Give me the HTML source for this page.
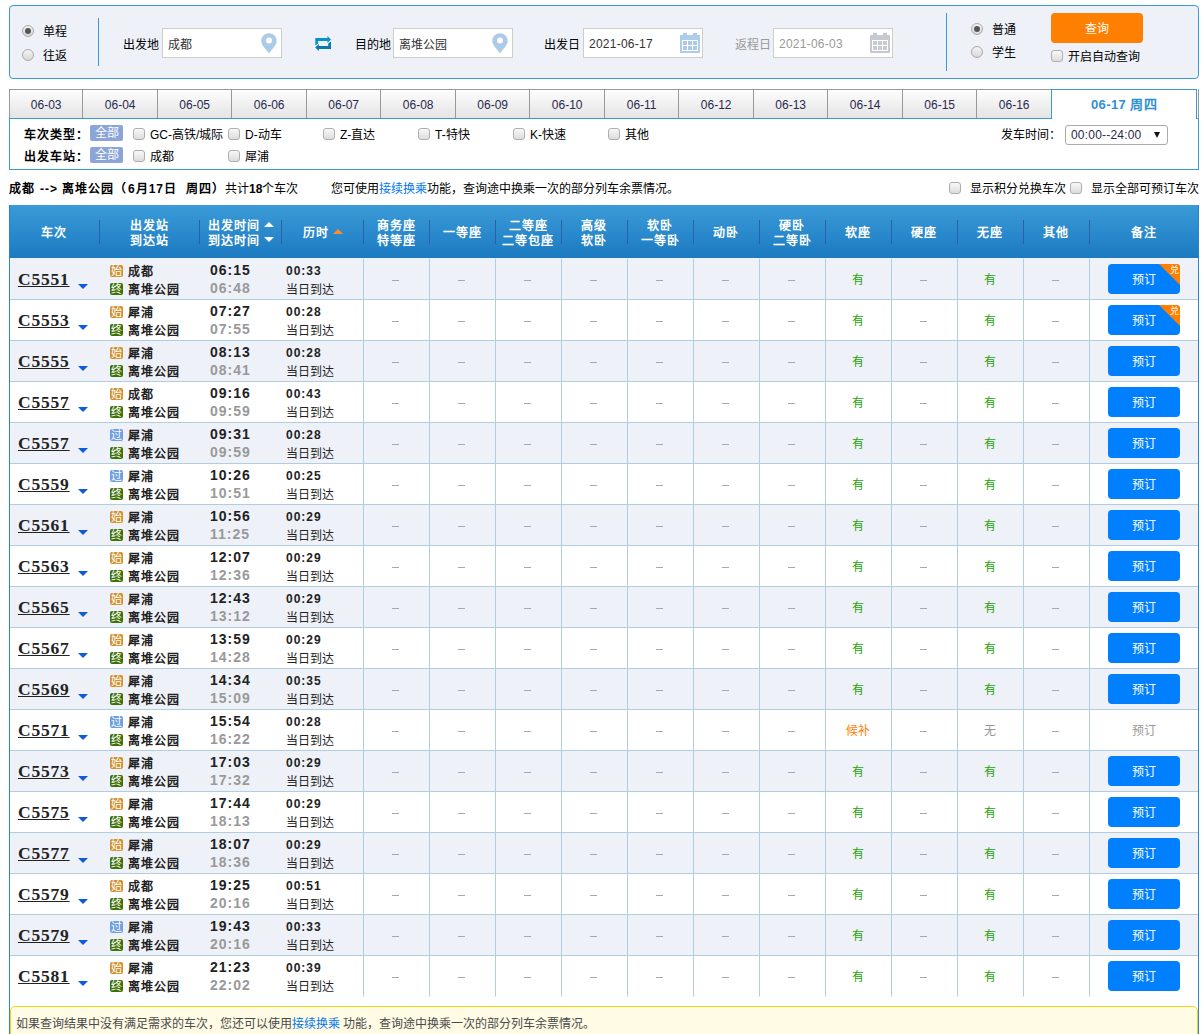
<!DOCTYPE html>
<html lang="zh-CN"><head><meta charset="utf-8"><title>车票预订</title>
<style>
*{box-sizing:border-box;}
html,body{margin:0;padding:0;}
body{width:1204px;height:1034px;overflow:hidden;background:#fff;position:relative;
 font-family:"Liberation Sans",sans-serif;font-size:12px;line-height:18px;color:#000;}
a{text-decoration:none;color:inherit;}
i,em,b{font-style:normal;}
.abs{position:absolute;}
/* search box */
.search{position:absolute;left:9px;top:5px;width:1190px;height:74px;border:1px solid #3b99d4;border-radius:4px;background:#eef1f8;}
.vl{position:absolute;width:1px;background:#3b99d4;}
.radio{position:absolute;width:12px;height:12px;border-radius:50%;border:1px solid #a9a9a9;background:linear-gradient(#f4f4f4,#d8d8d8);}
.radio.on:after{content:"";position:absolute;left:2px;top:2px;width:6px;height:6px;border-radius:50%;background:#555;}
.lb{position:absolute;height:18px;line-height:18px;white-space:nowrap;margin-top:1px;}
.bd{font-weight:bold;letter-spacing:1px;}
.inp{position:absolute;top:28px;width:120px;height:30px;border:1px solid #cfcdc7;background:#fff;}
.inp span{position:absolute;left:5px;top:7px;line-height:18px;color:#333;}
.gray{color:#999;}
.inp.dis span{color:#999;}
.inp span.dt{top:6px;letter-spacing:.25px;}
.qbtn{position:absolute;left:1051px;top:13px;width:92px;height:30px;border-radius:4px;background:#ff8000;color:#fff;text-align:center;line-height:33px;}
.cb{position:absolute;width:12px;height:12px;border:1px solid #aeaeae;border-radius:3px;background:linear-gradient(#f8f8f8,#dcdcdc);}
/* tabs */
.tabs{position:absolute;left:9px;top:89px;width:1042px;height:29px;border-top:1px solid #999;display:flex;}
.tabs div{flex:0 0 74.5px;border-left:1px solid #999;background:linear-gradient(#fdfdfd,#e4e4e4);text-align:center;line-height:30px;color:#28284e;}
.tabs div:first-child{flex-basis:73.4px;}
.tabon{position:absolute;left:1051px;top:89px;width:146px;height:30px;border:1px solid #3b99d4;border-bottom:0;background:#fff;text-align:center;line-height:29px;color:#2e8fd6;font-weight:bold;font-size:13px;letter-spacing:.4px;}
.tabr{position:absolute;left:1198px;top:89px;width:1px;height:29px;background:#999;}
/* filter */
.filter{position:absolute;left:9px;top:118px;width:1190px;height:52px;border:1px solid #3b99d4;background:#fff;}
.all{position:absolute;left:90px;width:33px;height:16px;border-radius:2px;background:#8ba5d8;color:#fff;text-align:center;line-height:17px;}
.sel{position:absolute;left:1065px;top:125px;width:103px;height:20px;border:1px solid #aaa;border-radius:3px;background:#fff;}
.sel span{position:absolute;left:5px;top:0;line-height:18px;color:#2a2a4a;letter-spacing:.2px;}
.sel i{position:absolute;left:88px;top:6px;width:0;height:0;border-left:3.5px solid transparent;border-right:3.5px solid transparent;border-top:6px solid #111;}
/* header */
.hd{position:absolute;left:9px;top:205px;width:1190px;height:53px;background:linear-gradient(#3b9bd8,#1c7ac1);box-shadow:inset 1px 0 0 #2583cb,inset -1px 0 0 #2583cb;color:#fff;font-weight:bold;}
.hd .h{position:absolute;top:2px;height:53px;text-align:center;line-height:15px;letter-spacing:1px;display:flex;align-items:center;justify-content:center;white-space:nowrap;}
.hd .dv{position:absolute;top:15px;width:1px;height:24px;background:#2c5fa8;}
.tri-u{position:absolute;width:0;height:0;border-left:5px solid transparent;border-right:5px solid transparent;border-bottom:5px solid #fff;}
.tri-d{position:absolute;width:0;height:0;border-left:5px solid transparent;border-right:5px solid transparent;border-top:5px solid #fff;}
/* table */
.tb{position:absolute;left:9px;top:258px;width:1190px;table-layout:fixed;border-collapse:separate;border-spacing:0;border-left:1px solid #2b87cd;border-right:1px solid #2b87cd;}
.tb td{height:41px;padding:0;border-bottom:1px solid #b0cedd;vertical-align:middle;}
.tb tr.first td{height:42px;border-top:1px solid #eef1f8;}
.tb tr.last td{border-bottom-color:#fff;}
.tb tr.odd td{background:#eef1f8;}
.tb tr.even td{background:#fff;}
.c1{width:89px;}
.c2{width:100px;}
.c3{width:82px;}
.c4{width:83px;border-right:1px solid #b0cedd;}
.s{width:66px;border-right:1px solid #b0cedd;text-align:center;}
.tb td.s{padding:2px 2px 0 0;}
.c16{width:108px;}
.tn{position:relative;height:40px;}
.num{position:absolute;left:8px;top:9px;letter-spacing:.8px;font-family:"Liberation Serif",serif;font-weight:bold;font-size:17.5px;line-height:22px;color:#222;text-decoration:underline;}
.dd{position:absolute;left:68px;top:25px;width:0;height:0;border-left:5px solid transparent;border-right:5px solid transparent;border-top:5px solid #0d5bdd;}
.st{position:relative;top:2px;height:18px;line-height:18px;padding-left:29px;font-weight:bold;letter-spacing:1px;color:#222;white-space:nowrap;}
.ic{position:absolute;left:11px;top:2px;letter-spacing:0;width:13px;height:12px;border-radius:2px;color:#fff;font-size:11px;line-height:12px;text-align:center;font-weight:normal;overflow:hidden;}
.ic-s{background:#cf9232;}
.ic-g{background:#6f9fe2;}
.ic-z{background:#3d7008;}
.t1,.t2{height:18px;line-height:18px;font-weight:bold;font-size:14px;letter-spacing:1px;padding-left:11px;color:#222;}
.t2{color:#999;}
.d1{position:relative;top:1px;height:18px;line-height:18px;font-weight:bold;letter-spacing:1px;padding-left:5px;color:#222;}
.d2{position:relative;top:2px;height:18px;line-height:18px;padding-left:5px;color:#222;}
.da{display:inline-block;width:7px;height:1px;background:#a8a8a8;vertical-align:middle;}
.yes{color:#26a306;}
.hb{color:#ff8000;}
.no{color:#999;}
.btn{display:block;position:relative;margin-left:18px;width:72px;height:30px;border-radius:4px;background:#0080ff;color:#fff;text-align:center;line-height:33px;overflow:hidden;}
.dui{position:absolute;right:0;top:0;width:0;height:0;border-left:21px solid transparent;border-top:21px solid #ff8000;}
.btn em{position:absolute;right:1px;top:1px;font-size:9px;line-height:10px;color:#fff;}
.nobtn{display:block;margin-left:18px;width:72px;text-align:center;color:#999;position:relative;top:1px;}
.sides{position:absolute;left:9px;top:996px;width:1190px;height:40px;border-left:1px solid #2b87cd;border-right:1px solid #2b87cd;}
.note{position:absolute;left:10px;top:1006px;width:1188px;height:40px;border:1px solid #fcd01e;border-radius:5px;background:#fffbe5;padding:8px 0 0 5px;line-height:18px;color:#4a4a4a;white-space:nowrap;}
.note a,.lk{color:#0077ee;}

</style></head><body>
<div class="search"></div>
<span class="radio on" style="left:22px;top:25px"></span><span class="lb" style="left:43px;top:22px">单程</span>
<span class="radio" style="left:22px;top:49px"></span><span class="lb" style="left:43px;top:46px">往返</span>
<div class="vl" style="left:98px;top:18px;height:48px"></div>
<span class="lb" style="left:123px;top:35px">出发地</span>
<div class="inp" style="left:162px"><span>成都</span></div>
<svg class="abs" style="left:261px;top:33px" width="16" height="21" viewBox="0 0 16 21"><path d="M8 0.3C3.7 0.3 0.3 3.6 0.3 7.8C0.3 12.4 4.6 15.6 8 20.6C11.4 15.6 15.7 12.4 15.7 7.8C15.7 3.6 12.3 0.3 8 0.3Z" fill="#accbe8"/><circle cx="8" cy="7.4" r="3" fill="#fff"/></svg>
<svg class="abs" style="left:315px;top:36px" width="16.3" height="15" viewBox="0 0 17 15" preserveAspectRatio="none"><path d="M0.3 2H13V0L16.8 3.5L13 7V5H3.3V7.5L0.3 9.6Z" fill="#0a92c8"/><path d="M16.8 13H4V15L0.2 11.5L4 8V10H13.8V7.5L16.8 5.4Z" fill="#0a78ae"/></svg>
<span class="lb" style="left:355px;top:35px">目的地</span>
<div class="inp" style="left:393px"><span>离堆公园</span></div>
<svg class="abs" style="left:492px;top:33px" width="16" height="21" viewBox="0 0 16 21"><path d="M8 0.3C3.7 0.3 0.3 3.6 0.3 7.8C0.3 12.4 4.6 15.6 8 20.6C11.4 15.6 15.7 12.4 15.7 7.8C15.7 3.6 12.3 0.3 8 0.3Z" fill="#accbe8"/><circle cx="8" cy="7.4" r="3" fill="#fff"/></svg>
<span class="lb" style="left:544px;top:35px">出发日</span>
<div class="inp" style="left:583px"><span class="dt">2021-06-17</span></div>
<svg class="abs" style="left:680px;top:33px" width="20" height="20" viewBox="0 0 20 20"><rect x="0" y="2" width="20" height="18" fill="#acceeb"/><rect x="3" y="0" width="4" height="2" fill="#acceeb"/><rect x="13" y="0" width="4" height="2" fill="#acceeb"/><rect x="2" y="7" width="16" height="11" fill="#fff"/><g fill="#abc9e4"><rect x="3" y="8" width="4" height="4"/><rect x="8" y="8" width="4" height="4"/><rect x="13" y="8" width="4" height="4"/><rect x="3" y="13" width="4" height="4"/><rect x="8" y="13" width="4" height="4"/><rect x="13" y="13" width="4" height="4"/></g></svg>
<span class="lb gray" style="left:735px;top:35px">返程日</span>
<div class="inp dis" style="left:773px"><span class="dt">2021-06-03</span></div>
<svg class="abs" style="left:870px;top:33px" width="20" height="20" viewBox="0 0 20 20"><rect x="0" y="2" width="20" height="18" fill="#c6c8d2"/><rect x="3" y="0" width="4" height="2" fill="#c6c8d2"/><rect x="13" y="0" width="4" height="2" fill="#c6c8d2"/><rect x="2" y="7" width="16" height="11" fill="#fff"/><g fill="#c9cbd4"><rect x="3" y="8" width="4" height="4"/><rect x="8" y="8" width="4" height="4"/><rect x="13" y="8" width="4" height="4"/><rect x="3" y="13" width="4" height="4"/><rect x="8" y="13" width="4" height="4"/><rect x="13" y="13" width="4" height="4"/></g></svg>
<div class="vl" style="left:946px;top:13px;height:58px"></div>
<span class="radio on" style="left:971px;top:23px"></span><span class="lb" style="left:992px;top:20px">普通</span>
<span class="radio" style="left:971px;top:46px"></span><span class="lb" style="left:992px;top:43px">学生</span>
<a class="qbtn">查询</a>
<span class="cb" style="left:1051px;top:50px"></span><span class="lb" style="left:1068px;top:47px">开启自动查询</span>

<div class="tabs"><div>06-03</div><div>06-04</div><div>06-05</div><div>06-06</div><div>06-07</div><div>06-08</div><div>06-09</div><div>06-10</div><div>06-11</div><div>06-12</div><div>06-13</div><div>06-14</div><div>06-15</div><div>06-16</div></div>
<div class="filter"></div>
<div class="tabon">06-17 周四</div><div class="tabr"></div>
<span class="lb" style="left:24px;top:125px"><b class="bd">车次类型</b><b>：</b></span>
<span class="all" style="top:125px">全部</span>
<span class="cb" style="left:133px;top:128px"></span><span class="lb" style="left:150px;top:125px">GC-高铁/城际</span>
<span class="cb" style="left:228px;top:128px"></span><span class="lb" style="left:245px;top:125px">D-动车</span>
<span class="cb" style="left:323px;top:128px"></span><span class="lb" style="left:340px;top:125px">Z-直达</span>
<span class="cb" style="left:418px;top:128px"></span><span class="lb" style="left:435px;top:125px">T-特快</span>
<span class="cb" style="left:513px;top:128px"></span><span class="lb" style="left:530px;top:125px">K-快速</span>
<span class="cb" style="left:608px;top:128px"></span><span class="lb" style="left:625px;top:125px">其他</span>
<span class="lb" style="left:24px;top:147px"><b class="bd">出发车站</b><b>：</b></span>
<span class="all" style="top:147px">全部</span>
<span class="cb" style="left:133px;top:150px"></span><span class="lb" style="left:150px;top:147px">成都</span>
<span class="cb" style="left:228px;top:150px"></span><span class="lb" style="left:245px;top:147px">犀浦</span>
<span class="lb" style="left:1001px;top:125px">发车时间：</span>
<div class="sel"><span>00:00--24:00</span><i></i></div>

<span class="lb bd" style="left:9px;top:179px">成都</span><span class="lb bd" style="left:40px;top:179px">--&gt;</span><span class="lb bd" style="left:62px;top:179px">离堆公园（</span><span class="lb bd" style="left:128px;top:179px">6月17日</span><span class="lb bd" style="left:186px;top:179px">周四）</span><span class="lb" style="left:225px;top:179px">共计<b>18</b>个车次</span>
<span class="lb" style="left:331px;top:179px">您可使用<a class="lk">接续换乘</a>功能，查询途中换乘一次的部分列车余票情况。</span>
<span class="cb" style="left:949px;top:182px"></span><span class="lb" style="left:970px;top:179px">显示积分兑换车次</span>
<span class="cb" style="left:1070px;top:182px"></span><span class="lb" style="left:1091px;top:179px">显示全部可预订车次</span>

<div class="hd">
<div class="h" style="left:0;width:90px">车次</div><i class="dv" style="left:90px"></i>
<div class="h" style="left:90px;width:100px">出发站<br>到达站</div><i class="dv" style="left:190px"></i>
<div class="h" style="left:198px;width:54px">出发时间<br>到达时间</div><i class="tri-u" style="left:255px;top:17px"></i><i class="tri-d" style="left:255px;top:32px"></i><i class="dv" style="left:272px"></i>
<div class="h" style="left:294px;width:26px">历时</div><i class="tri-u" style="left:324px;top:24px;border-bottom-color:#ff8a2a"></i><i class="dv" style="left:354px"></i>
<div class="h" style="left:354px;width:66px">商务座<br>特等座</div><i class="dv" style="left:420px"></i>
<div class="h" style="left:420px;width:66px">一等座</div><i class="dv" style="left:486px"></i>
<div class="h" style="left:486px;width:66px">二等座<br>二等包座</div><i class="dv" style="left:552px"></i>
<div class="h" style="left:552px;width:66px">高级<br>软卧</div><i class="dv" style="left:618px"></i>
<div class="h" style="left:618px;width:66px">软卧<br>一等卧</div><i class="dv" style="left:684px"></i>
<div class="h" style="left:684px;width:66px">动卧</div><i class="dv" style="left:750px"></i>
<div class="h" style="left:750px;width:66px">硬卧<br>二等卧</div><i class="dv" style="left:816px"></i>
<div class="h" style="left:816px;width:66px">软座</div><i class="dv" style="left:882px"></i>
<div class="h" style="left:882px;width:66px">硬座</div><i class="dv" style="left:948px"></i>
<div class="h" style="left:948px;width:66px">无座</div><i class="dv" style="left:1014px"></i>
<div class="h" style="left:1014px;width:66px">其他</div><i class="dv" style="left:1080px"></i>
<div class="h" style="left:1080px;width:110px">备注</div>
</div>
<table class="tb" cellspacing="0" cellpadding="0"><tbody>
<tr class="odd first"><td class="c1"><div class="tn"><a class="num">C5551</a><i class="dd"></i></div></td><td class="c2"><div class="st"><i class="ic ic-s">始</i>成都</div><div class="st"><i class="ic ic-z">终</i>离堆公园</div></td><td class="c3"><div class="t1">06:15</div><div class="t2">06:48</div></td><td class="c4"><div class="d1">00:33</div><div class="d2">当日到达</div></td><td class="s"><i class="da"></i></td><td class="s"><i class="da"></i></td><td class="s"><i class="da"></i></td><td class="s"><i class="da"></i></td><td class="s"><i class="da"></i></td><td class="s"><i class="da"></i></td><td class="s"><i class="da"></i></td><td class="s yes">有</td><td class="s"><i class="da"></i></td><td class="s yes">有</td><td class="s"><i class="da"></i></td><td class="c16"><a class="btn">预订<b class="dui"></b><em>兑</em></a></td></tr>
<tr class="even"><td class="c1"><div class="tn"><a class="num">C5553</a><i class="dd"></i></div></td><td class="c2"><div class="st"><i class="ic ic-s">始</i>犀浦</div><div class="st"><i class="ic ic-z">终</i>离堆公园</div></td><td class="c3"><div class="t1">07:27</div><div class="t2">07:55</div></td><td class="c4"><div class="d1">00:28</div><div class="d2">当日到达</div></td><td class="s"><i class="da"></i></td><td class="s"><i class="da"></i></td><td class="s"><i class="da"></i></td><td class="s"><i class="da"></i></td><td class="s"><i class="da"></i></td><td class="s"><i class="da"></i></td><td class="s"><i class="da"></i></td><td class="s yes">有</td><td class="s"><i class="da"></i></td><td class="s yes">有</td><td class="s"><i class="da"></i></td><td class="c16"><a class="btn">预订<b class="dui"></b><em>兑</em></a></td></tr>
<tr class="odd"><td class="c1"><div class="tn"><a class="num">C5555</a><i class="dd"></i></div></td><td class="c2"><div class="st"><i class="ic ic-s">始</i>犀浦</div><div class="st"><i class="ic ic-z">终</i>离堆公园</div></td><td class="c3"><div class="t1">08:13</div><div class="t2">08:41</div></td><td class="c4"><div class="d1">00:28</div><div class="d2">当日到达</div></td><td class="s"><i class="da"></i></td><td class="s"><i class="da"></i></td><td class="s"><i class="da"></i></td><td class="s"><i class="da"></i></td><td class="s"><i class="da"></i></td><td class="s"><i class="da"></i></td><td class="s"><i class="da"></i></td><td class="s yes">有</td><td class="s"><i class="da"></i></td><td class="s yes">有</td><td class="s"><i class="da"></i></td><td class="c16"><a class="btn">预订</a></td></tr>
<tr class="even"><td class="c1"><div class="tn"><a class="num">C5557</a><i class="dd"></i></div></td><td class="c2"><div class="st"><i class="ic ic-s">始</i>成都</div><div class="st"><i class="ic ic-z">终</i>离堆公园</div></td><td class="c3"><div class="t1">09:16</div><div class="t2">09:59</div></td><td class="c4"><div class="d1">00:43</div><div class="d2">当日到达</div></td><td class="s"><i class="da"></i></td><td class="s"><i class="da"></i></td><td class="s"><i class="da"></i></td><td class="s"><i class="da"></i></td><td class="s"><i class="da"></i></td><td class="s"><i class="da"></i></td><td class="s"><i class="da"></i></td><td class="s yes">有</td><td class="s"><i class="da"></i></td><td class="s yes">有</td><td class="s"><i class="da"></i></td><td class="c16"><a class="btn">预订</a></td></tr>
<tr class="odd"><td class="c1"><div class="tn"><a class="num">C5557</a><i class="dd"></i></div></td><td class="c2"><div class="st"><i class="ic ic-g">过</i>犀浦</div><div class="st"><i class="ic ic-z">终</i>离堆公园</div></td><td class="c3"><div class="t1">09:31</div><div class="t2">09:59</div></td><td class="c4"><div class="d1">00:28</div><div class="d2">当日到达</div></td><td class="s"><i class="da"></i></td><td class="s"><i class="da"></i></td><td class="s"><i class="da"></i></td><td class="s"><i class="da"></i></td><td class="s"><i class="da"></i></td><td class="s"><i class="da"></i></td><td class="s"><i class="da"></i></td><td class="s yes">有</td><td class="s"><i class="da"></i></td><td class="s yes">有</td><td class="s"><i class="da"></i></td><td class="c16"><a class="btn">预订</a></td></tr>
<tr class="even"><td class="c1"><div class="tn"><a class="num">C5559</a><i class="dd"></i></div></td><td class="c2"><div class="st"><i class="ic ic-g">过</i>犀浦</div><div class="st"><i class="ic ic-z">终</i>离堆公园</div></td><td class="c3"><div class="t1">10:26</div><div class="t2">10:51</div></td><td class="c4"><div class="d1">00:25</div><div class="d2">当日到达</div></td><td class="s"><i class="da"></i></td><td class="s"><i class="da"></i></td><td class="s"><i class="da"></i></td><td class="s"><i class="da"></i></td><td class="s"><i class="da"></i></td><td class="s"><i class="da"></i></td><td class="s"><i class="da"></i></td><td class="s yes">有</td><td class="s"><i class="da"></i></td><td class="s yes">有</td><td class="s"><i class="da"></i></td><td class="c16"><a class="btn">预订</a></td></tr>
<tr class="odd"><td class="c1"><div class="tn"><a class="num">C5561</a><i class="dd"></i></div></td><td class="c2"><div class="st"><i class="ic ic-s">始</i>犀浦</div><div class="st"><i class="ic ic-z">终</i>离堆公园</div></td><td class="c3"><div class="t1">10:56</div><div class="t2">11:25</div></td><td class="c4"><div class="d1">00:29</div><div class="d2">当日到达</div></td><td class="s"><i class="da"></i></td><td class="s"><i class="da"></i></td><td class="s"><i class="da"></i></td><td class="s"><i class="da"></i></td><td class="s"><i class="da"></i></td><td class="s"><i class="da"></i></td><td class="s"><i class="da"></i></td><td class="s yes">有</td><td class="s"><i class="da"></i></td><td class="s yes">有</td><td class="s"><i class="da"></i></td><td class="c16"><a class="btn">预订</a></td></tr>
<tr class="even"><td class="c1"><div class="tn"><a class="num">C5563</a><i class="dd"></i></div></td><td class="c2"><div class="st"><i class="ic ic-s">始</i>犀浦</div><div class="st"><i class="ic ic-z">终</i>离堆公园</div></td><td class="c3"><div class="t1">12:07</div><div class="t2">12:36</div></td><td class="c4"><div class="d1">00:29</div><div class="d2">当日到达</div></td><td class="s"><i class="da"></i></td><td class="s"><i class="da"></i></td><td class="s"><i class="da"></i></td><td class="s"><i class="da"></i></td><td class="s"><i class="da"></i></td><td class="s"><i class="da"></i></td><td class="s"><i class="da"></i></td><td class="s yes">有</td><td class="s"><i class="da"></i></td><td class="s yes">有</td><td class="s"><i class="da"></i></td><td class="c16"><a class="btn">预订</a></td></tr>
<tr class="odd"><td class="c1"><div class="tn"><a class="num">C5565</a><i class="dd"></i></div></td><td class="c2"><div class="st"><i class="ic ic-s">始</i>犀浦</div><div class="st"><i class="ic ic-z">终</i>离堆公园</div></td><td class="c3"><div class="t1">12:43</div><div class="t2">13:12</div></td><td class="c4"><div class="d1">00:29</div><div class="d2">当日到达</div></td><td class="s"><i class="da"></i></td><td class="s"><i class="da"></i></td><td class="s"><i class="da"></i></td><td class="s"><i class="da"></i></td><td class="s"><i class="da"></i></td><td class="s"><i class="da"></i></td><td class="s"><i class="da"></i></td><td class="s yes">有</td><td class="s"><i class="da"></i></td><td class="s yes">有</td><td class="s"><i class="da"></i></td><td class="c16"><a class="btn">预订</a></td></tr>
<tr class="even"><td class="c1"><div class="tn"><a class="num">C5567</a><i class="dd"></i></div></td><td class="c2"><div class="st"><i class="ic ic-s">始</i>犀浦</div><div class="st"><i class="ic ic-z">终</i>离堆公园</div></td><td class="c3"><div class="t1">13:59</div><div class="t2">14:28</div></td><td class="c4"><div class="d1">00:29</div><div class="d2">当日到达</div></td><td class="s"><i class="da"></i></td><td class="s"><i class="da"></i></td><td class="s"><i class="da"></i></td><td class="s"><i class="da"></i></td><td class="s"><i class="da"></i></td><td class="s"><i class="da"></i></td><td class="s"><i class="da"></i></td><td class="s yes">有</td><td class="s"><i class="da"></i></td><td class="s yes">有</td><td class="s"><i class="da"></i></td><td class="c16"><a class="btn">预订</a></td></tr>
<tr class="odd"><td class="c1"><div class="tn"><a class="num">C5569</a><i class="dd"></i></div></td><td class="c2"><div class="st"><i class="ic ic-s">始</i>犀浦</div><div class="st"><i class="ic ic-z">终</i>离堆公园</div></td><td class="c3"><div class="t1">14:34</div><div class="t2">15:09</div></td><td class="c4"><div class="d1">00:35</div><div class="d2">当日到达</div></td><td class="s"><i class="da"></i></td><td class="s"><i class="da"></i></td><td class="s"><i class="da"></i></td><td class="s"><i class="da"></i></td><td class="s"><i class="da"></i></td><td class="s"><i class="da"></i></td><td class="s"><i class="da"></i></td><td class="s yes">有</td><td class="s"><i class="da"></i></td><td class="s yes">有</td><td class="s"><i class="da"></i></td><td class="c16"><a class="btn">预订</a></td></tr>
<tr class="even"><td class="c1"><div class="tn"><a class="num">C5571</a><i class="dd"></i></div></td><td class="c2"><div class="st"><i class="ic ic-g">过</i>犀浦</div><div class="st"><i class="ic ic-z">终</i>离堆公园</div></td><td class="c3"><div class="t1">15:54</div><div class="t2">16:22</div></td><td class="c4"><div class="d1">00:28</div><div class="d2">当日到达</div></td><td class="s"><i class="da"></i></td><td class="s"><i class="da"></i></td><td class="s"><i class="da"></i></td><td class="s"><i class="da"></i></td><td class="s"><i class="da"></i></td><td class="s"><i class="da"></i></td><td class="s"><i class="da"></i></td><td class="s hb">候补</td><td class="s"><i class="da"></i></td><td class="s no">无</td><td class="s"><i class="da"></i></td><td class="c16"><span class="nobtn">预订</span></td></tr>
<tr class="odd"><td class="c1"><div class="tn"><a class="num">C5573</a><i class="dd"></i></div></td><td class="c2"><div class="st"><i class="ic ic-s">始</i>犀浦</div><div class="st"><i class="ic ic-z">终</i>离堆公园</div></td><td class="c3"><div class="t1">17:03</div><div class="t2">17:32</div></td><td class="c4"><div class="d1">00:29</div><div class="d2">当日到达</div></td><td class="s"><i class="da"></i></td><td class="s"><i class="da"></i></td><td class="s"><i class="da"></i></td><td class="s"><i class="da"></i></td><td class="s"><i class="da"></i></td><td class="s"><i class="da"></i></td><td class="s"><i class="da"></i></td><td class="s yes">有</td><td class="s"><i class="da"></i></td><td class="s yes">有</td><td class="s"><i class="da"></i></td><td class="c16"><a class="btn">预订</a></td></tr>
<tr class="even"><td class="c1"><div class="tn"><a class="num">C5575</a><i class="dd"></i></div></td><td class="c2"><div class="st"><i class="ic ic-s">始</i>犀浦</div><div class="st"><i class="ic ic-z">终</i>离堆公园</div></td><td class="c3"><div class="t1">17:44</div><div class="t2">18:13</div></td><td class="c4"><div class="d1">00:29</div><div class="d2">当日到达</div></td><td class="s"><i class="da"></i></td><td class="s"><i class="da"></i></td><td class="s"><i class="da"></i></td><td class="s"><i class="da"></i></td><td class="s"><i class="da"></i></td><td class="s"><i class="da"></i></td><td class="s"><i class="da"></i></td><td class="s yes">有</td><td class="s"><i class="da"></i></td><td class="s yes">有</td><td class="s"><i class="da"></i></td><td class="c16"><a class="btn">预订</a></td></tr>
<tr class="odd"><td class="c1"><div class="tn"><a class="num">C5577</a><i class="dd"></i></div></td><td class="c2"><div class="st"><i class="ic ic-s">始</i>犀浦</div><div class="st"><i class="ic ic-z">终</i>离堆公园</div></td><td class="c3"><div class="t1">18:07</div><div class="t2">18:36</div></td><td class="c4"><div class="d1">00:29</div><div class="d2">当日到达</div></td><td class="s"><i class="da"></i></td><td class="s"><i class="da"></i></td><td class="s"><i class="da"></i></td><td class="s"><i class="da"></i></td><td class="s"><i class="da"></i></td><td class="s"><i class="da"></i></td><td class="s"><i class="da"></i></td><td class="s yes">有</td><td class="s"><i class="da"></i></td><td class="s yes">有</td><td class="s"><i class="da"></i></td><td class="c16"><a class="btn">预订</a></td></tr>
<tr class="even"><td class="c1"><div class="tn"><a class="num">C5579</a><i class="dd"></i></div></td><td class="c2"><div class="st"><i class="ic ic-s">始</i>成都</div><div class="st"><i class="ic ic-z">终</i>离堆公园</div></td><td class="c3"><div class="t1">19:25</div><div class="t2">20:16</div></td><td class="c4"><div class="d1">00:51</div><div class="d2">当日到达</div></td><td class="s"><i class="da"></i></td><td class="s"><i class="da"></i></td><td class="s"><i class="da"></i></td><td class="s"><i class="da"></i></td><td class="s"><i class="da"></i></td><td class="s"><i class="da"></i></td><td class="s"><i class="da"></i></td><td class="s yes">有</td><td class="s"><i class="da"></i></td><td class="s yes">有</td><td class="s"><i class="da"></i></td><td class="c16"><a class="btn">预订</a></td></tr>
<tr class="odd"><td class="c1"><div class="tn"><a class="num">C5579</a><i class="dd"></i></div></td><td class="c2"><div class="st"><i class="ic ic-g">过</i>犀浦</div><div class="st"><i class="ic ic-z">终</i>离堆公园</div></td><td class="c3"><div class="t1">19:43</div><div class="t2">20:16</div></td><td class="c4"><div class="d1">00:33</div><div class="d2">当日到达</div></td><td class="s"><i class="da"></i></td><td class="s"><i class="da"></i></td><td class="s"><i class="da"></i></td><td class="s"><i class="da"></i></td><td class="s"><i class="da"></i></td><td class="s"><i class="da"></i></td><td class="s"><i class="da"></i></td><td class="s yes">有</td><td class="s"><i class="da"></i></td><td class="s yes">有</td><td class="s"><i class="da"></i></td><td class="c16"><a class="btn">预订</a></td></tr>
<tr class="even last"><td class="c1"><div class="tn"><a class="num">C5581</a><i class="dd"></i></div></td><td class="c2"><div class="st"><i class="ic ic-s">始</i>犀浦</div><div class="st"><i class="ic ic-z">终</i>离堆公园</div></td><td class="c3"><div class="t1">21:23</div><div class="t2">22:02</div></td><td class="c4"><div class="d1">00:39</div><div class="d2">当日到达</div></td><td class="s"><i class="da"></i></td><td class="s"><i class="da"></i></td><td class="s"><i class="da"></i></td><td class="s"><i class="da"></i></td><td class="s"><i class="da"></i></td><td class="s"><i class="da"></i></td><td class="s"><i class="da"></i></td><td class="s yes">有</td><td class="s"><i class="da"></i></td><td class="s yes">有</td><td class="s"><i class="da"></i></td><td class="c16"><a class="btn">预订</a></td></tr>
</tbody></table>
<div class="sides"></div>
<div class="note">如果查询结果中没有满足需求的车次，您还可以使用<a>接续换乘</a> 功能，查询途中换乘一次的部分列车余票情况。</div>
</body></html>
